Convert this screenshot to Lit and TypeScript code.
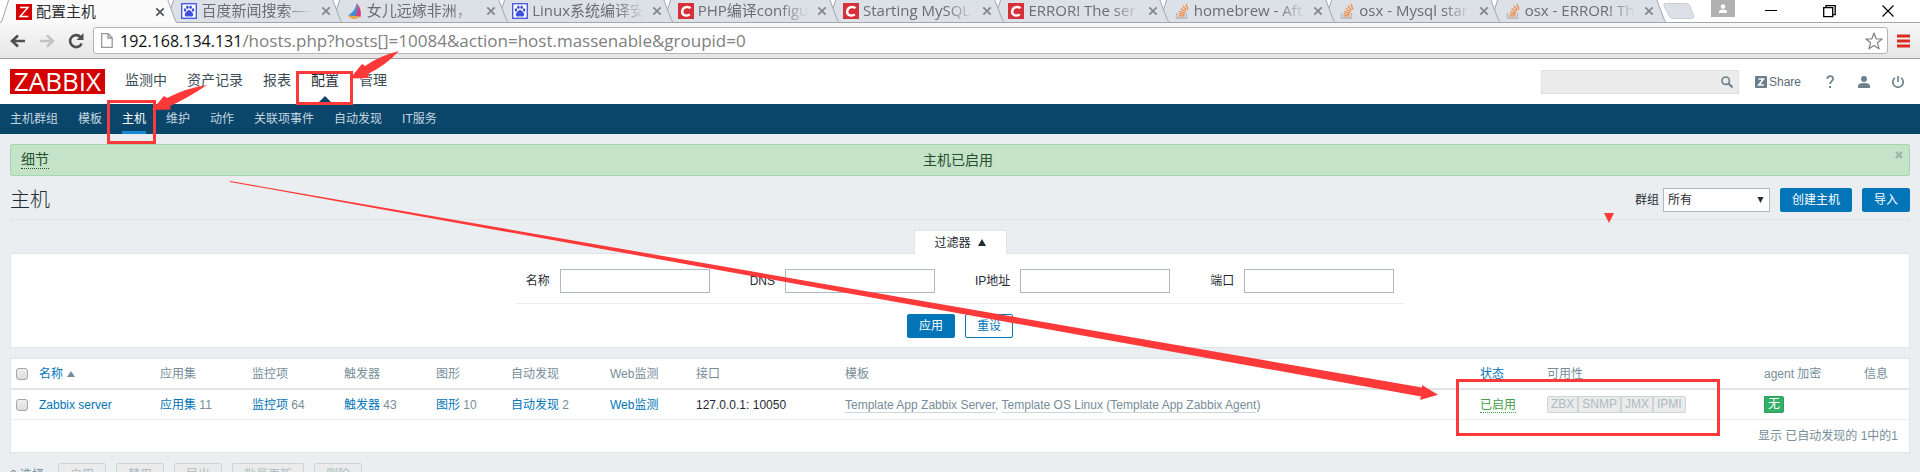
import { LitElement, html, svg, css, nothing } from "lit";
import { customElement } from "lit/decorators.js";
import { classMap } from "lit/directives/class-map.js";

const base = css`
  * {
    box-sizing: border-box;
  }
  :host {
    display: block;
  }
  a {
    color: inherit;
    text-decoration: none;
  }
  button,
  input,
  select {
    font: inherit;
    margin: 0;
  }
  svg {
    display: block;
    flex: none;
  }
`;

type Icon = "zabbix" | "baidu" | "sail" | "csdn" | "stack";

const favicons = {
  zabbix: svg`<rect width="16" height="16" fill="#d40000"/><path d="M4 3.5h8L4 12.500h8.300" fill="none" stroke="#fff" stroke-width="1.400"/>`,
  baidu: svg`<rect x=".7" y=".7" width="14.600" height="14.600" fill="#fff" stroke="#4a5be0" stroke-width="1.400"/>
    <g fill="#3d50dc"><ellipse cx="4" cy="7" rx="1.300" ry="1.800"/><ellipse cx="6.400" cy="4.300" rx="1.300" ry="1.800"/><ellipse cx="9.600" cy="4.300" rx="1.300" ry="1.800"/><ellipse cx="12" cy="7" rx="1.300" ry="1.800"/>
    <path d="M8 7c1.600 0 2.200 1.600 3.400 2.700 1.500 1.400.9 3.900-1.200 3.900-.9 0-1.400-.3-2.200-.3s-1.300.3-2.200.3c-2.100 0-2.700-2.500-1.200-3.900C5.800 8.600 6.400 7 8 7z"/></g>`,
  sail: svg`<path d="M9.500 0c4 4 5.100 9 4.100 14L7 13C10.500 9 11 4.500 9.500 0z" fill="#d8417c"/><path d="M9.500 0c1.500 5 1 9.500-1.500 13.500L.8 12.500C5.500 9.500 9 6 9.500 0z" fill="#3f8fd8"/><path d="M.6 12c4 1.200 8.600 1.700 13.200 1.200-2 2-5 3-8 2.700C3.400 15.300 1.600 14 .6 12z" fill="#f0a63c"/>`,
  csdn: svg`<rect width="16" height="16" fill="#d8303a"/><path d="M12.500 5.300C11 3.500 5 3 4.200 8s5.500 5.500 7.600 3.200" fill="none" stroke="#fff" stroke-width="2.400"/>`,
  stack: svg`<path d="M2.500 10v5h10v-5" fill="none" stroke="#b3b6ba" stroke-width="1.300"/><path d="M4.500 12.800h6M4.600 10.600l6 .7M5.200 8.200l5.700 1.700M6.600 5.500l5 3.100M8.900 3l3.800 4.400M12 1l2 5.500" fill="none" stroke="#f0883e" stroke-width="1.200"/>`,
};

const tabs: { icon: Icon; title: string; active?: boolean }[] = [
  { icon: "zabbix", title: "配置主机", active: true },
  { icon: "baidu", title: "百度新闻搜索——" },
  { icon: "sail", title: "女儿远嫁非洲，" },
  { icon: "baidu", title: "Linux系统编译安" },
  { icon: "csdn", title: "PHP编译configu" },
  { icon: "csdn", title: "Starting MySQL" },
  { icon: "csdn", title: "ERROR! The ser" },
  { icon: "stack", title: "homebrew - Aft" },
  { icon: "stack", title: "osx - Mysql star" },
  { icon: "stack", title: "osx - ERROR! Th" },
];

@customElement("browser-chrome")
export class BrowserChrome extends LitElement {
  static styles = [
    base,
    css`
      :host {
        font-family: "Open Sans", "Noto Sans CJK SC", sans-serif;
        font-size: 15px;
        color: #6b6d72;
      }
      .strip {
        display: flex;
        height: 23px;
        background: #fff;
        border-bottom: 1px solid #a3a6aa;
      }
      .tabs {
        flex: 1;
        min-width: 0;
        display: flex;
      }
      .tab {
        position: relative;
        flex: 1;
        min-width: 0;
        height: 22px;
        display: flex;
        align-items: center;
        padding: 0 0 0 16px;
        gap: 4px;
      }
      .tab.active {
        color: #2c2e31;
        height: 23px;
      }
      .shape {
        position: absolute;
        left: 0;
        top: 0;
        width: calc(100% + 12px);
        height: 100%;
        z-index: -1;
        fill: #dce0e7;
        stroke: #a3a6aa;
      }
      .tab.active .shape {
        fill: #fafafa;
      }
      .title {
        flex: 1;
        min-width: 0;
        height: 22px;
        line-height: 20px;
        white-space: nowrap;
        mask-image: linear-gradient(to right, #000 75%, transparent 100%);
      }
      .tab.active .title {
        mask-image: none;
      }
      .close {
        border: 0;
        background: none;
        padding: 4px 0 4px 4px;
        flex: none;
        color: #85878b;
      }
      .active .close {
        color: #55575a;
      }
      .window {
        width: 266px;
        display: flex;
        align-items: flex-start;
        color: #000;
      }
      .window button {
        border: 0;
        background: none;
        padding: 0;
        height: 22px;
      }
      .window .newtab {
        width: 32px;
        height: 19px;
        margin-left: 9px;
        padding-top: 3px;
      }
      .window .user {
        width: 24px;
        height: 17px;
        margin: 0 30px 0 16px;
        background: #b1b1b1;
        display: grid;
        place-items: center;
      }
      .wins {
        display: flex;
        gap: 46px;
      }
      .bar {
        display: flex;
        align-items: center;
        height: 36px;
        padding: 0 10px;
        gap: 9px;
        background: linear-gradient(#f8f8f8, #e6e6e6);
        border-bottom: 1px solid #a0a0a0;
      }
      .nav {
        display: flex;
        gap: 13px;
      }
      .bar button {
        border: 0;
        background: none;
        padding: 0;
      }
      .omni {
        flex: 1;
        height: 27px;
        display: flex;
        align-items: center;
        gap: 7px;
        padding: 0 4px 0 7px;
        background: #fff;
        border: 1px solid #b4b4b4;
        border-radius: 3px;
        font-size: 17px;
        line-height: 22px;
        color: #808080;
      }
      .url {
        flex: 1;
      }
      .host {
        font-size: 16px;
        color: #111;
      }
    `,
  ];

  render() {
    return html`
      <div class="strip">
        <div class="tabs" role="tablist">
          ${tabs.map(
            (t, i) => html`<div
              class=${classMap({ tab: true, active: !!t.active })}
              role="tab"
              style="z-index:${tabs.length - i}"
            >
              <svg class="shape" viewBox="0 0 178 22" preserveAspectRatio="none">
                <path d="M0 22.500L2 20L9 -1H168L176 20L178 22.500" vector-effect="non-scaling-stroke" />
              </svg>
              <svg width="16" height="16" viewBox="0 0 16 16">${favicons[t.icon]}</svg>
              <span class="title">${t.title}</span>
              <button class="close" aria-label="关闭">
                <svg width="10" height="10" viewBox="0 0 10 10"><path d="M1.300 1.300l7.400 7.400M8.700 1.300L1.300 8.700" stroke="currentColor" stroke-width="1.800" /></svg>
              </button>
            </div>`
          )}
        </div>
        <div class="window">
          <button class="newtab" aria-label="新标签页">
            <svg width="32" height="16" viewBox="0 0 32 16"><path d="M2.500.5h20.500q3 0 4 3l3.500 9q1 3-2 3H10q-3 0-4-3L1 3Q.3.5 2.500.5z" fill="#dce0e7" stroke="#c9ccd2" /></svg>
          </button>
          <button class="user" aria-label="用户">
            <svg width="10" height="10" viewBox="0 0 10 10" fill="#fff"><circle cx="5" cy="2.500" r="2.300" /><path d="M1 9V7.500q0-2 4-2t4 2V9z" /></svg>
          </button>
          <div class="wins">
            <button aria-label="最小化"><svg width="12" height="22" viewBox="0 0 12 22"><path d="M0 10.500h12" stroke="#000" /></svg></button>
            <button aria-label="还原"><svg width="13" height="22" viewBox="0 0 13 22"><path d="M.7 7.700h9v9h-9zM3 7.500V5.600h9.200v9H10" fill="none" stroke="#000" stroke-width="1.300" /></svg></button>
            <button aria-label="关闭窗口"><svg width="12" height="22" viewBox="0 0 12 22"><path d="M.5 5.500l11 11M11.500 5.500l-11 11" stroke="#000" stroke-width="1.200" /></svg></button>
          </div>
        </div>
      </div>
      <div class="bar">
        <div class="nav">
          <button aria-label="后退"><svg width="16" height="16" viewBox="0 0 16 16"><path d="M15 8H2M8 2.500L2 8l6 5.500" fill="none" stroke="#505050" stroke-width="2.600" /></svg></button>
          <button aria-label="前进"><svg width="16" height="16" viewBox="0 0 16 16"><path d="M1 8h13M8 2.500L14 8l-6 5.500" fill="none" stroke="#c2c2c2" stroke-width="2.400" /></svg></button>
          <button aria-label="重新加载"><svg width="16" height="16" viewBox="0 0 16 16"><path d="M13.600 10.500A6 6 0 1 1 12.500 4" fill="none" stroke="#505050" stroke-width="2.600" /><path d="M15.500 0v7H8.500z" fill="#505050" /></svg></button>
        </div>
        <div class="omni">
          <svg width="12" height="15" viewBox="0 0 12 15"><path d="M.7.7h6.500l4 4v9.600H.7zM7 .7V5h4.200" fill="#fff" stroke="#999" stroke-width="1.300" /></svg>
          <span class="url"><span class="host">192.168.134.131</span>/hosts.php?hosts[]=10084&amp;action=host.massenable&amp;groupid=0</span>
          <button aria-label="收藏"><svg width="18" height="18" viewBox="0 0 18 18"><path d="M9 1l2.100 5.800 6 .2-4.700 3.800 1.700 6L9 13.400l-5.100 3.400 1.700-6L.9 7l6-.2z" fill="#fff" stroke="#808080" stroke-width="1.200" stroke-linejoin="round" /></svg></button>
        </div>
        <button aria-label="菜单"><svg width="13" height="14" viewBox="0 0 13 14"><path d="M0 2h13M0 7h13M0 12h13" stroke="#dd2b22" stroke-width="3" /></svg></button>
      </div>
    `;
  }
}

@customElement("site-header")
export class SiteHeader extends LitElement {
  static styles = [
    base,
    css`
      .top {
        display: flex;
        align-items: center;
        height: 45px;
        padding: 0 16px 0 10px;
        background: #fff;
      }
      .logo {
        width: 95px;
        height: 25px;
        background: #d40000;
        color: #fff;
        font: 26px/25px "Open Sans", sans-serif;
        text-align: center;
      }
      .menu {
        display: flex;
        flex: 1;
        margin-left: 10px;
        font-size: 14px;
        color: #3c4d57;
      }
      .menu a {
        height: 45px;
        line-height: 43px;
        padding: 0 10px;
      }
      .menu .on {
        color: #1f2c33;
        position: relative;
      }
      .menu .on::after {
        content: "";
        position: absolute;
        bottom: 0;
        left: 50%;
        margin-left: -8px;
        border: 8px solid transparent;
        border-top: 0;
        border-bottom-color: #0a466a;
      }
      .tools {
        display: flex;
        align-items: center;
        color: #6b7f8d;
      }
      .search {
        display: flex;
        align-items: center;
        width: 198px;
        height: 24px;
        margin-right: 16px;
        padding-right: 5px;
        background: #ececec;
        border: 1px solid #e0e0e0;
      }
      .search input {
        flex: 1;
        min-width: 0;
        border: 0;
        background: none;
        outline: 0;
      }
      .search button {
        border: 0;
        padding: 0;
        background: none;
        color: inherit;
      }
      .share {
        display: flex;
        align-items: center;
        gap: 2px;
        color: #5b6d79;
        margin-right: 23px;
      }
      .icons {
        display: flex;
        align-items: center;
        gap: 22px;
      }
      .sub {
        display: flex;
        gap: 20px;
        height: 30px;
        padding: 0 10px;
        background: #0a466a;
        color: #c5d6e0;
      }
      .sub a {
        line-height: 30px;
      }
      .sub .on {
        color: #fff;
        box-shadow: inset 0 -3px #1888d4;
      }
    `,
  ];

  render() {
    const main = ["监测中", "资产记录", "报表", "配置", "管理"];
    const sub = ["主机群组", "模板", "主机", "维护", "动作", "关联项事件", "自动发现", "IT服务"];
    return html`
      <header class="top">
        <a class="logo" href="#">ZABBIX</a>
        <nav class="menu">
          ${main.map((m) => html`<a href="#" class=${classMap({ on: m === "配置" })}>${m}</a>`)}
        </nav>
        <div class="tools">
          <div class="search">
            <input type="text" aria-label="搜索" />
            <button aria-label="搜索"><svg width="12" height="12" viewBox="0 0 12 12"><circle cx="4.700" cy="4.700" r="3.700" fill="none" stroke="currentColor" stroke-width="1.600" /><path d="M7.500 7.500L11.500 11.500" stroke="currentColor" stroke-width="2" /></svg></button>
          </div>
          <a class="share" href="#"><svg width="12" height="12" viewBox="0 0 12 12"><rect width="12" height="12" rx="1" fill="#6b7f8d" /><path d="M3.500 3h5L3.800 9h5" fill="none" stroke="#fff" stroke-width="1.600" /></svg>Share</a>
          <div class="icons">
            <a href="#" aria-label="帮助"><svg width="12" height="14" viewBox="0 0 12 14"><path d="M3.300 4c0-3.700 5.800-3.700 5.800-.3C9.100 6 6.100 6.200 6.100 9" fill="none" stroke="currentColor" stroke-width="1.700" /><path d="M5.100 11h2v2h-2z" fill="currentColor" /></svg></a>
            <a href="#" aria-label="用户"><svg width="12" height="12" viewBox="0 0 12 12" fill="currentColor"><circle cx="6" cy="3" r="2.900" /><path d="M0 12v-2q0-3 6-3t6 3v2z" /></svg></a>
            <a href="#" aria-label="退出"><svg width="12" height="12" viewBox="0 0 12 12"><path d="M3 1.800a5.200 5.200 0 1 0 6 0M6 0v6" fill="none" stroke="currentColor" stroke-width="1.600" /></svg></a>
          </div>
        </div>
      </header>
      <nav class="sub">
        ${sub.map((m) => html`<a href="#" class=${classMap({ on: m === "主机" })}>${m}</a>`)}
      </nav>
    `;
  }
}

@customElement("host-list")
export class HostList extends LitElement {
  static styles = [
    base,
    css`
      :host {
        padding: 10px;
      }
      .btn {
        height: 24px;
        padding: 0 11px;
        border: 1px solid #0275b8;
        border-radius: 2px;
        background: #0275b8;
        color: #fff;
        line-height: 22px;
      }
      .btn.alt {
        background: #fff;
        color: #0275b8;
      }
      .btn:disabled {
        background: #ebebeb;
        border-color: #ccd5d9;
        color: #acbbc2;
      }
      .msg {
        position: relative;
        display: grid;
        grid-template-columns: 1fr auto 1fr;
        align-items: center;
        height: 32px;
        padding: 0 14px 0 10px;
        border: 1px solid #a3d7aa;
        border-radius: 2px;
        background: #c5e3c8;
        color: #2a4f2f;
        font-size: 14px;
      }
      .msg a {
        justify-self: start;
        line-height: 17px;
        border-bottom: 1px dotted;
      }
      .msg button {
        position: absolute;
        top: 6px;
        right: 6px;
        padding: 0;
        border: 0;
        background: none;
        color: #9bb3ab;
      }
      .head {
        display: flex;
        align-items: center;
        justify-content: space-between;
        height: 44px;
        padding-top: 5px;
        border-bottom: 1px solid #dfe4e7;
      }
      h1 {
        margin: 0;
        font-size: 20px;
        line-height: 24px;
        font-weight: 300;
        color: #1f2c33;
      }
      .actions {
        display: flex;
        align-items: center;
        gap: 10px;
      }
      .group {
        display: flex;
        align-items: center;
        gap: 4px;
      }
      .select {
        display: grid;
        align-items: center;
      }
      .select > * {
        grid-area: 1 / 1;
      }
      .select svg {
        justify-self: end;
        margin-right: 6px;
        pointer-events: none;
      }
      select {
        appearance: none;
        width: 107px;
        height: 24px;
        padding: 0 4px;
        border: 1px solid #acbbc2;
        border-radius: 0;
        background: #fff;
        color: #1f2c33;
      }
      .toggle {
        display: flex;
        align-items: center;
        justify-content: center;
        gap: 7px;
        width: 93px;
        height: 24px;
        margin: 10px auto -1px;
        padding: 0;
        position: relative;
        background: #fff;
        color: #1f2c33;
        border: 1px solid #dfe4e7;
        border-bottom: 0;
      }
      .filter {
        display: flex;
        flex-direction: column;
        align-items: center;
        gap: 10px;
        padding: 15px 0 9px;
        background: #fff;
        border: 1px solid #dfe4e7;
      }
      .fields {
        display: flex;
        gap: 40px;
        padding: 0 10px 10px;
        border-bottom: 1px solid #ebeef0;
      }
      .fields label {
        display: flex;
        align-items: center;
        gap: 10px;
      }
      .fields input {
        width: 150px;
        height: 24px;
        border: 1px solid #acbbc2;
        padding: 0 4px;
      }
      .row {
        display: flex;
        gap: 10px;
      }
      .table {
        margin: 10px 0;
        background: #fff;
        border: 1px solid #dfe4e7;
        color: #768d99;
      }
      table {
        width: 100%;
        table-layout: fixed;
        border-collapse: collapse;
      }
      th,
      td {
        height: 30px;
        padding: 1px 5px 0;
        text-align: left;
        font-weight: 400;
        white-space: nowrap;
        line-height: 18px;
      }
      th {
        border-bottom: 2px solid #dfe4e7;
      }
      td {
        border-bottom: 1px solid #ebeef0;
      }
      .check {
        width: 23px;
      }
      .name {
        width: 121px;
      }
      .count {
        width: 92px;
      }
      .graph {
        width: 75px;
      }
      .disc {
        width: 99px;
      }
      .web {
        width: 86px;
      }
      .iface {
        width: 149px;
      }
      .status {
        width: 67px;
      }
      .avail {
        width: 217px;
      }
      .enc {
        width: 100px;
      }
      .info {
        width: 50px;
      }
      .link {
        color: #0275b8;
      }
      .sort {
        display: flex;
        align-items: center;
        gap: 4px;
      }
      .dark {
        color: #1f2c33;
      }
      .tpl {
        border-bottom: 1px solid #ccd5d9;
      }
      .on {
        color: #429e47;
        border-bottom: 1px dotted;
      }
      input[type="checkbox"] {
        appearance: none;
        display: block;
        width: 12px;
        height: 12px;
        border: 1px solid #a6a6a6;
        border-radius: 3px;
        background: linear-gradient(#efefef, #dcdcdc);
      }
      .badges {
        display: flex;
        line-height: 15px;
      }
      .badges span {
        padding: 0 3px;
        border: 1px solid #ccd5d9;
        background: #ebebeb;
        color: #acbbc2;
      }
      .badges span:first-child {
        border-radius: 2px 0 0 2px;
      }
      .badges span:last-child {
        border-radius: 0 2px 2px 0;
      }
      .badges .none {
        background: #34af67;
        border-color: #2f9f5e;
        color: #fff;
        border-radius: 2px;
      }
      .total {
        line-height: 32px;
        padding-right: 11px;
        text-align: right;
      }
      .footer {
        display: flex;
        align-items: center;
        gap: 10px;
        color: #768d99;
      }
      .selected {
        margin-right: 4px;
      }
    `,
  ];

  render() {
    const cols: [string, string][] = [
      ["count", "应用集"],
      ["count", "监控项"],
      ["count", "触发器"],
      ["graph", "图形"],
      ["disc", "自动发现"],
      ["web", "Web监测"],
      ["iface", "接口"],
      ["", "模板"],
      ["status", "状态"],
      ["avail", "可用性"],
      ["enc", "agent 加密"],
      ["info", "信息"],
    ];
    const counts: [string, number | null][] = [
      ["应用集", 11],
      ["监控项", 64],
      ["触发器", 43],
      ["图形", 10],
      ["自动发现", 2],
      ["Web监测", null],
    ];
    const tpl = (s: string) => html`<a class="tpl" href="#">${s}</a>`;
    return html`
      <div class="msg">
        <a href="#">细节</a><span>主机已启用</span>
        <button aria-label="关闭"><svg width="8" height="8" viewBox="0 0 8 8"><path d="M1 1l6 6M7 1L1 7" stroke="currentColor" stroke-width="2.400" /></svg></button>
      </div>
      <div class="head">
        <h1>主机</h1>
        <div class="actions">
          <div class="group">
            <label for="group">群组</label>
            <div class="select">
              <select id="group"><option>所有</option></select>
              <svg width="7" height="6" viewBox="0 0 7 6"><path d="M.5 0h6L3.500 6z" fill="#1f2c33" /></svg>
            </div>
          </div>
          <button class="btn">创建主机</button>
          <button class="btn">导入</button>
        </div>
      </div>
      <button class="toggle">过滤器<svg width="8" height="7" viewBox="0 0 8 7"><path d="M4 0l4 7H0z" fill="#1f2c33" /></svg></button>
      <form class="filter">
        <div class="fields">
          ${["名称", "DNS", "IP地址", "端口"].map((f) => html`<label>${f}<input type="text" /></label>`)}
        </div>
        <div class="row">
          <button class="btn" type="button">应用</button>
          <button class="btn alt" type="reset">重设</button>
        </div>
      </form>
      <div class="table">
        <table>
          <thead>
            <tr>
              <th class="check"><input type="checkbox" aria-label="全选" /></th>
              <th class="name"><a class="link sort" href="#">名称<svg width="8" height="6" viewBox="0 0 8 6"><path d="M4 0l4 6H0z" fill="#768d99" /></svg></a></th>
              ${cols.map(
                ([c, t]) => html`<th class=${c || nothing}>${t === "状态" ? html`<a class="link" href="#">${t}</a>` : t}</th>`
              )}
            </tr>
          </thead>
          <tbody>
            <tr>
              <td><input type="checkbox" aria-label="Zabbix server" /></td>
              <td><a class="link" href="#">Zabbix server</a></td>
              ${counts.map(([t, n]) => html`<td><a class="link" href="#">${t}</a>${n === null ? nothing : ` ${n}`}</td>`)}
              <td class="dark">127.0.0.1: 10050</td>
              <td>${tpl("Template App Zabbix Server")}, ${tpl("Template OS Linux")} (${tpl("Template App Zabbix Agent")})</td>
              <td><a class="on" href="#">已启用</a></td>
              <td><div class="badges">${["ZBX", "SNMP", "JMX", "IPMI"].map((b) => html`<span>${b}</span>`)}</div></td>
              <td><div class="badges"><span class="none">无</span></div></td>
              <td></td>
            </tr>
          </tbody>
        </table>
        <div class="total">显示 已自动发现的 1中的1</div>
      </div>
      <div class="footer">
        <span class="selected">0 选择</span>
        ${["启用", "禁用", "导出", "批量更新", "删除"].map((b) => html`<button class="btn" disabled>${b}</button>`)}
      </div>
    `;
  }
}

@customElement("app-root")
export class AppRoot extends LitElement {
  static styles = [
    base,
    css`
      :host {
        position: relative;
        height: 100vh;
        overflow: hidden;
        background: #ebeef0;
        color: #1f2c33;
        font: 12px/18px "Liberation Sans", "Noto Sans CJK SC", sans-serif;
      }
      .marks {
        position: absolute;
        left: 0;
        top: 0;
        z-index: 20;
        pointer-events: none;
      }
    `,
  ];

  render() {
    return html`
      <browser-chrome></browser-chrome>
      <site-header></site-header>
      <host-list></host-list>
      <svg class="marks" width="1920" height="472" viewBox="0 0 1920 472" aria-hidden="true">
        <g fill="none" stroke="#fd3939" stroke-width="3">
          <path d="M108.500 101.500h46v41h-46zM297.500 72.500h54v31h-54zM1457.500 380.500h261v54h-261z" />
        </g>
        <g fill="#fd3939">
          <path d="M207 85Q186 88 167 98L164 96L152 110L171 109.500L170 106Q188 98 207 85z" />
          <path d="M399 51Q379 56 365 66L362 64L350 78.500L369 78L368 74Q386 65 399 51z" />
          <path d="M230 181L1422 387.500V385L1438 394.700L1420 400L1421 396.500L230 182z" />
          <path d="M1604 213h10l-5 10z" />
        </g>
      </svg>
    `;
  }
}
